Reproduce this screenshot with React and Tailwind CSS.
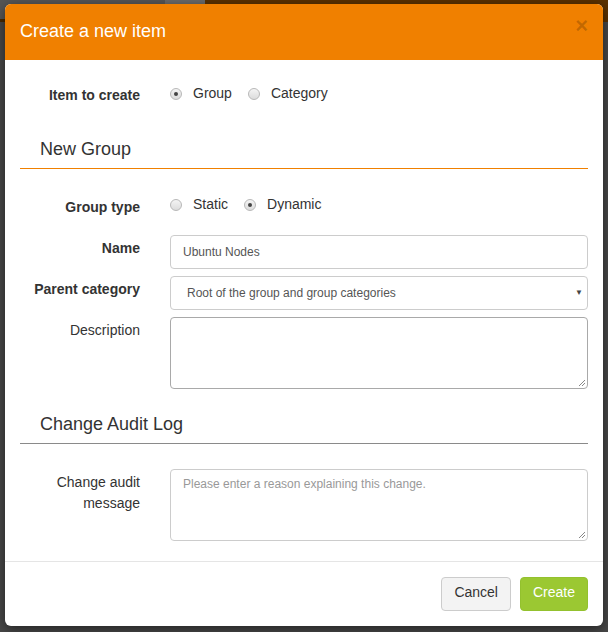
import React from 'react';

function Radio({ checked, label }) {
  return (
    <label className="flex items-center">
      <span className="w-[12px] h-[12px] rounded-full border border-[#b8b8b8] bg-gradient-to-b from-[#f4f4f4] to-[#dcdcdc] flex items-center justify-center">
        {checked && <span className="w-[4px] h-[4px] rounded-full bg-[#444]" />}
      </span>
      <span className="ml-[11px] text-[14px] text-[#333]">{label}</span>
    </label>
  );
}

function Row({ label, bold, tight, children, className = '' }) {
  return (
    <div className={`flex ${className}`}>
      <div className={`w-[135px] shrink-0 pr-[15px] text-right text-[14px] text-[#333] leading-[21px] ${tight ? 'pt-[3px]' : 'pt-[7px]'} ${bold ? 'font-bold' : ''}`}>
        {label}
      </div>
      <div className="flex-1 pl-[15px]">{children}</div>
    </div>
  );
}

function Grip() {
  return (
    <svg className="absolute right-[1px] bottom-[1px]" width="8" height="8" viewBox="0 0 8 8">
      <path d="M7 1 L1 7 M7 4 L4 7" stroke="#888" strokeWidth="1" />
    </svg>
  );
}

export default function App() {
  return (
    <div className="w-[608px] h-[632px] bg-[#474747] relative overflow-hidden" style={{ fontFamily: '"Liberation Sans", Arial, sans-serif' }}>
      {/* page behind the overlay */}
      <div className="flex h-[22px]">
        <div className="w-[165px] bg-[#565656] border-b-[3px] border-[#4a2a00]" />
        <div className="w-[40px] bg-[#6a6a6a]" />
        <div className="flex-1 bg-[#5a3100]" />
      </div>

      <div className="absolute left-[5px] top-[4px] w-[598px] h-[622px] bg-white rounded-[6px] shadow-[0_3px_12px_rgba(0,0,0,0.5)] flex flex-col overflow-hidden">
        {/* header */}
        <div className="h-[56px] bg-[#f08000] flex items-start justify-between px-[15px] pt-[15px]">
          <h4 className="text-[18px] leading-[24px] text-white">Create a new item</h4>
          <span className="text-[22px] leading-[20px] font-bold text-[#000]/20 -mt-[3px]">×</span>
        </div>

        {/* body */}
        <div className="px-[15px] pt-[18px] flex-1">
          <Row label="Item to create" bold>
            <div className="flex items-center gap-[16px] pt-[5px]">
              <Radio checked label="Group" />
              <Radio label="Category" />
            </div>
          </Row>

          <div className="mt-[31px]">
            <h3 className="pl-[20px] pb-[7px] text-[18px] leading-[24px] text-[#333]">New Group</h3>
            <div className="h-px bg-[#f08000]" />
          </div>

          <Row label="Group type" bold className="mt-[21px]">
            <div className="flex items-center gap-[16px] pt-[4px]">
              <Radio label="Static" />
              <Radio checked label="Dynamic" />
            </div>
          </Row>

          <Row label="Name" bold tight className="mt-[17px]">
            <div className="h-[34px] border border-[#ccc] rounded-[4px] px-[12px] flex items-center text-[12px] text-[#555]">
              Ubuntu Nodes
            </div>
          </Row>

          <Row label="Parent category" bold tight className="mt-[7px]">
            <div className="h-[34px] border border-[#ccc] rounded-[4px] pl-[16px] pr-[4px] flex items-center justify-between text-[12px] text-[#555]">
              <span>Root of the group and group categories</span>
              <span className="text-[8px] text-[#444]">▼</span>
            </div>
          </Row>

          <Row label="Description" tight className="mt-[7px]">
            <div className="h-[72px] border border-[#a9a9a9] rounded-[4px] relative">
              <Grip />
            </div>
          </Row>

          <div className="mt-[23px]">
            <h3 className="pl-[20px] pb-[7px] text-[18px] leading-[24px] text-[#333]">Change Audit Log</h3>
            <div className="h-px bg-[#8a8a8a]" />
          </div>

          <Row label={<>Change audit<br />message</>} tight className="mt-[25px]">
            <div className="h-[72px] border border-[#ccc] rounded-[4px] relative px-[12px] pt-[5px] text-[12px] text-[#999]">
              Please enter a reason explaining this change.
              <Grip />
            </div>
          </Row>
        </div>

        {/* footer */}
        <div className="border-t border-[#e5e5e5] h-[65px] px-[15px] flex items-start justify-end gap-[9px] pt-[15px]">
          <button className="h-[34px] px-[12px] rounded-[4px] border border-[#ccc] bg-[#f3f3f3] text-[14px] text-[#333] leading-[20px] pb-[4px]">
            Cancel
          </button>
          <button className="h-[34px] px-[12px] rounded-[4px] border border-[#93c12e] bg-[#9bc832] text-[14px] text-white leading-[20px] pb-[4px]">
            Create
          </button>
        </div>
      </div>
    </div>
  );
}
